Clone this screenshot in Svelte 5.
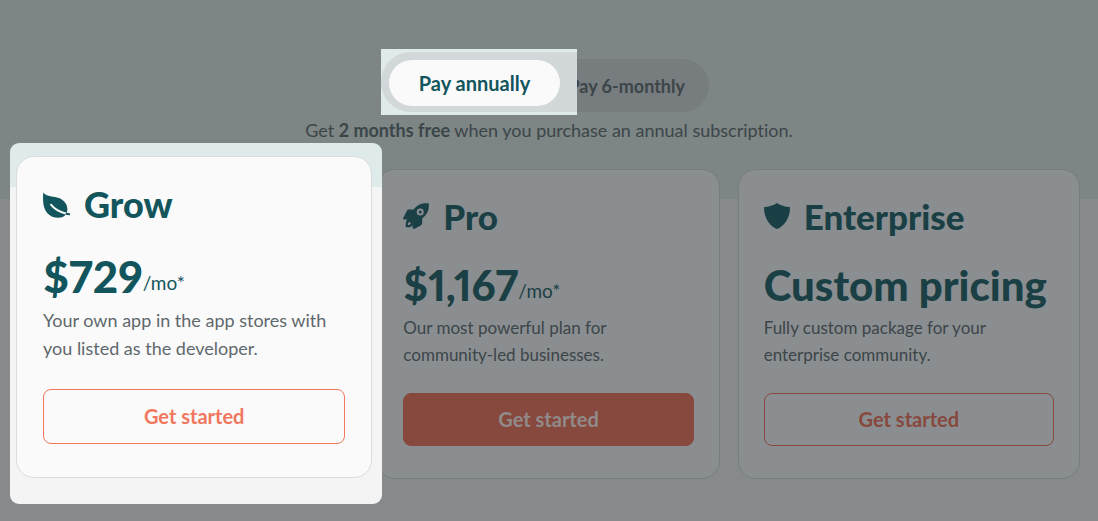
<script>
	const plans = [
		{
			id: 'grow',
			name: 'Grow',
			price: '$729',
			unit: '/mo*',
			text: 'Your own app in the app stores with you listed as the developer.',
			spotlight: true
		},
		{
			id: 'pro',
			name: 'Pro',
			price: '$1,167',
			unit: '/mo*',
			text: 'Our most powerful plan for community-led businesses.',
			filled: true
		},
		{
			id: 'enterprise',
			name: 'Enterprise',
			price: 'Custom pricing',
			text: 'Fully custom package for your enterprise community.'
		}
	];

	let billing = $state('annual');
</script>

{#snippet icon(id)}
	{#if id === 'grow'}
		<svg class="icon" viewBox="0 0 27 27" aria-hidden="true">
			<path fill="currentColor" d="M.3 1.500C3 4.900 7 5.200 12 6c8 1.200 12.400 6.500 12.400 12.300 0 5-3.600 8.500-9.100 8.500C6.500 26.800.8 20.200.2 11.200 0 7.700 0 4.200.3 1.500z" />
			<path class="vein" d="M8 13.700c4 5.300 9 7.600 15.500 9" />
			<path class="stem" d="M23.500 22.800l2.800.4" />
		</svg>
	{:else if id === 'pro'}
		<svg class="icon" viewBox="0 0 26 26" aria-hidden="true">
			<path fill="currentColor" fill-rule="evenodd" d="M25.700.3C19.500-.3 14.500 1.300 10.600 6.600H6.200c-1 0-1.900.5-2.400 1.400L.3 14.700c-.5 1 .1 1.900 1.200 1.900h5.200l2.900 2.900v5.100c0 1.100.9 1.700 1.900 1.200l6.300-3.400c.9-.5 1.400-1.300 1.400-2.300v-4.500C24.400 11.700 26.500 6.500 25.700.3zM17.200 5.500a3.500 3.500 0 1 1 0 7 3.500 3.500 0 0 1 0-7z" />
			<circle fill="currentColor" cx="17.200" cy="9" r="1.500" />
			<path fill="currentColor" fill-rule="evenodd" d="M4.500 16h4l1.600 3.900c.3 3.200-2.300 4.700-7.300 4.400-.3-3.200 0-6.600 1.700-8.300zm1.900 3.100c-1.100.4-1.500 1.300-1.500 2.900 1.500 0 2.500-.5 2.700-1.600.1-.9-.4-1.400-1.200-1.300z" />
		</svg>
	{:else}
		<svg class="icon" viewBox="0 0 26 26" aria-hidden="true">
			<path fill="currentColor" d="M13 0c3.800 2.500 8 3.800 12.500 4 .4 0 .5.2.5.6C26 14 21.500 22 14.300 25.600c-.9.5-1.700.5-2.600 0C4.500 22 0 14 0 4.600 0 4.200.1 4 .5 4 5 3.800 9.200 2.500 13 0z" />
		</svg>
	{/if}
{/snippet}

{#snippet card(plan)}
	<article class="card">
		<h2>{@render icon(plan.id)}{plan.name}</h2>
		<p class="price">{plan.price}{#if plan.unit}<span>{plan.unit}</span>{/if}</p>
		<p class="text">{plan.text}</p>
		<button type="button" class="cta" class:filled={plan.filled}>Get started</button>
	</article>
{/snippet}

<main>
	<div class="toggle" role="group" aria-label="Billing period">
		<div class="toggle-spotlight">
			<div class="track">
				<button type="button" aria-pressed={billing === 'annual'} onclick={() => (billing = 'annual')}>Pay annually</button>
			</div>
		</div>
		<button type="button" class="other" aria-pressed={billing === 'half'} onclick={() => (billing = 'half')}>Pay 6-monthly</button>
	</div>

	<p class="note">Get <strong>2 months free</strong> when you purchase an annual subscription.</p>

	<section class="plans">
		{#each plans as plan (plan.id)}
			<div class="plan">
				{#if plan.spotlight}
					<div class="spotlight">{@render card(plan)}</div>
				{:else}
					{@render card(plan)}
				{/if}
			</div>
		{/each}
	</section>
</main>

<style>
	:global(body) {
		margin: 0;
		background: #868a8c;
	}

	main {
		--teal: #1a3f44;
		--copy: #3c4549;
		--coral: #87483d;
		--surface: #8a8e90;
		--line: #777c7f;
		box-sizing: border-box;
		min-height: 100vh;
		padding: 59px 0 42px;
		background: linear-gradient(#7d8585 199px, #868a8c 199px);
		color: var(--copy);
		font-family: Lato, 'Liberation Sans', sans-serif;
		font-size: 17px;
		font-variant-ligatures: none;
		font-variant-numeric: proportional-nums;
	}

	h2,
	p {
		margin: 0;
	}

	button {
		font-family: inherit;
		font-weight: 700;
		cursor: pointer;
	}

	.toggle {
		position: relative;
		display: flex;
		justify-content: flex-end;
		width: 320px;
		height: 53px;
		margin: 0 auto;
		border-radius: 27px;
		background: #777c7f;
	}

	.other {
		padding: 0 24px;
		border: 0;
		background: none;
		color: var(--copy);
		font-size: 18px;
	}

	.toggle-spotlight {
		position: absolute;
		top: -10px;
		left: -8px;
		z-index: 1;
		box-sizing: border-box;
		width: 196px;
		height: 66px;
		padding: 3px 0;
		background: #deebea;
	}

	.track {
		box-sizing: border-box;
		height: 60px;
		padding: 8px 17px 6px 8px;
		border-radius: 30px 0 0 30px;
		background: #d2d7d9;
	}

	.track button {
		width: 100%;
		height: 46px;
		padding: 0;
		border: 0;
		border-radius: 23px;
		background: #fafafa;
		color: #12555c;
		font-size: 20px;
	}

	.note {
		margin-top: 5px;
		font-size: 18px;
		line-height: 27px;
		text-align: center;
	}

	.plans {
		display: grid;
		grid-template-columns: repeat(3, 1fr);
		gap: 18px;
		margin-top: 25px;
		padding: 0 18px 0 17px;
	}

	.plan {
		position: relative;
	}

	.card {
		box-sizing: border-box;
		padding: 25px 25px 32px;
		border: 1px solid var(--line);
		border-radius: 18px;
		background: var(--surface);
	}

	h2 {
		display: flex;
		align-items: center;
		gap: 14px;
		color: var(--teal);
		font-size: 35px;
		font-weight: 900;
		line-height: 42px;
	}

	.icon {
		width: 26px;
		height: 26px;
		flex: none;
	}

	.vein,
	.stem {
		fill: none;
		stroke: var(--surface);
		stroke-width: 2;
		stroke-linecap: round;
	}

	.stem {
		stroke: currentColor;
	}

	.price {
		margin: 23px 0 4px;
		color: var(--teal);
		font-size: 42px;
		font-weight: 900;
		line-height: 50px;
		white-space: nowrap;
	}

	.price span {
		font-size: 19px;
		font-weight: 400;
		line-height: 1;
		vertical-align: 3px;
	}

	.text {
		line-height: 27px;
	}

	.cta {
		display: block;
		width: 100%;
		height: 53px;
		margin-top: 25px;
		padding: 0 0 2px;
		border: 1px solid var(--coral);
		border-radius: 8px;
		background: none;
		color: var(--coral);
		font-size: 20px;
	}

	.cta.filled {
		background: var(--coral);
		color: #918a8a;
	}

	/* lit area around the highlighted plan */
	.spotlight {
		--teal: #12555c;
		--copy: #5f686c;
		--coral: #f1775e;
		--surface: #fafafa;
		--line: #d8dddd;
		position: absolute;
		top: -26px;
		left: -7px;
		right: -23px;
		z-index: 1;
		box-sizing: border-box;
		padding: 13px 10px 26px 6px;
		border-radius: 9px;
		background: linear-gradient(#deebea 44px, #f4f4f4 44px);
		color: var(--copy);
	}

	.spotlight .card {
		padding: 26px 26px 33px;
	}

	.spotlight h2 {
		font-size: 36px;
	}

	.spotlight .icon {
		width: 27px;
		height: 27px;
	}

	.spotlight .price {
		margin: 26px 0 5px;
		font-size: 44px;
	}

	.spotlight .text {
		font-size: 18px;
		line-height: 28px;
	}

	.spotlight .cta {
		height: 55px;
		margin-top: 27px;
	}
</style>
